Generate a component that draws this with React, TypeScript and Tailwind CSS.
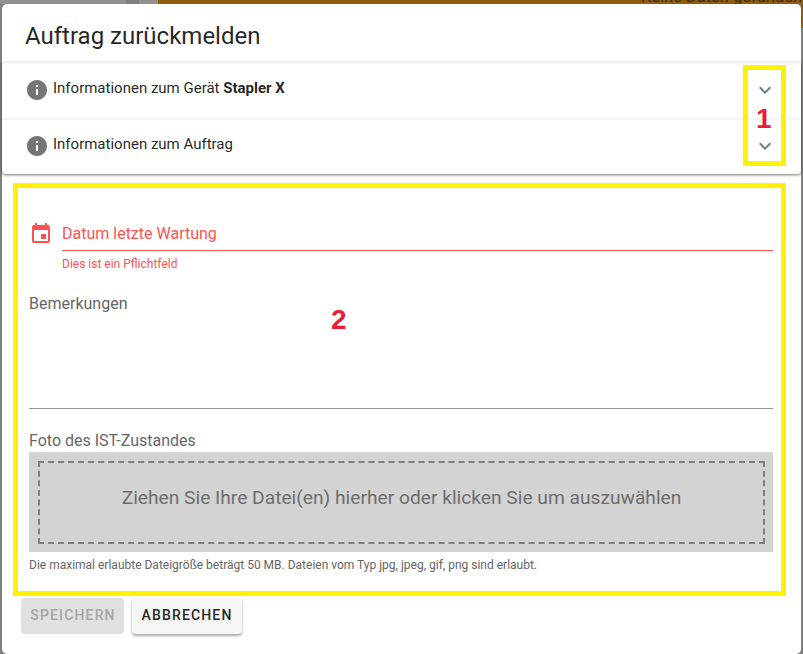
function InfoIcon() {
  return (
    <svg width="24" height="24" viewBox="0 0 24 24" className="shrink-0 fill-[#757575]">
      <path d="M12 2C6.48 2 2 6.48 2 12s4.48 10 10 10 10-4.48 10-10S17.52 2 12 2zm1 15h-2v-6h2v6zm0-8h-2V7h2v2z" />
    </svg>
  );
}

function CalendarIcon() {
  return (
    <svg width="24" height="24" viewBox="0 0 24 24" className="shrink-0 fill-[#ff5252]">
      <path d="M17 12h-5v5h5v-5zM16 1v2H8V1H6v2H5c-1.11 0-1.99.9-1.99 2L3 19c0 1.1.89 2 2 2h14c1.1 0 2-.9 2-2V5c0-1.1-.9-2-2-2h-1V1h-2zm3 18H5V8h14v11z" />
    </svg>
  );
}

function ExpandIcon() {
  return (
    <svg width="24" height="24" viewBox="0 0 24 24" className="ml-auto shrink-0 fill-[#6f7d90]">
      <path d="M16.59 8.59L12 13.17 7.41 8.59 6 10l6 6 6-6z" />
    </svg>
  );
}

function InfoRow({ children }: { children: React.ReactNode }) {
  return (
    <div className="h-14 flex items-center pb-[2px] pl-[23px] pr-6 border-t-2 border-[#f5f5f5] text-[15px] text-[rgba(0,0,0,0.87)]">
      <InfoIcon />
      <span className="ml-[4px] mb-[4px]">{children}</span>
      <ExpandIcon />
    </div>
  );
}

export default function App() {
  return (
    <div className="relative h-[654px] w-[803px] overflow-hidden bg-[#7f7f7f] font-['Roboto',sans-serif]">
      {/* Seite hinter dem Dialog */}
      <div className="flex h-1 overflow-hidden bg-[#919191]">
        <div className="w-[126px] shrink-0" />
        <div className="w-[13px] shrink-0 bg-[#808080]" />
        <div className="w-[19px] shrink-0" />
        <div className="flex min-w-0 flex-1 bg-[#8f5b0c] pl-[483px] text-[16.5px] leading-6 text-[#3b2a10]">
          <span className="mt-[-15px] whitespace-nowrap">Keine Daten gefunden</span>
        </div>
      </div>
      <div className="absolute right-0 top-1 h-6 w-[2px] bg-[#8f5b0c]" />

      <div className="absolute left-[2px] top-1 w-[799px] h-[650px] bg-white rounded-[5px]">
        <h2 className="px-[23px] pt-[16px] h-[58px] text-[24px] leading-8 text-[rgba(0,0,0,0.87)]">
          Auftrag zurückmelden
        </h2>

        <div className="rounded-b-[4px] shadow-[0_1px_3px_rgba(0,0,0,0.55)]">
          <InfoRow>
            Informationen zum Gerät <b className="font-bold">Stapler X</b>
          </InfoRow>
          <InfoRow>Informationen zum Auftrag</InfoRow>
        </div>

        <form className="pl-[27px] pr-[28px] pt-[48px]">
          <div className="flex items-start">
            <CalendarIcon />
            <div className="ml-[9px] flex-1">
              <div className="h-[28px] text-[16px] leading-6 text-[#ff5252]">Datum letzte Wartung</div>
              <div className="h-px bg-[#ff5252]" />
              <div className="mt-[6px] text-[12px] leading-[15px] text-[#ff5252]">
                Dies ist ein Pflichtfeld
              </div>
            </div>
          </div>

          <div className="mt-[20px] h-[116px] text-[16px] leading-6 text-[#666666]">Bemerkungen</div>
          <div className="h-px bg-[#949494]" />

          <div className="mt-[20px] text-[16px] leading-6 text-[#666666]">Foto des IST-Zustandes</div>

          <div className="h-[100px] mt-[-1px] pt-[9px] pb-[8px] pl-[9px] pr-[8px] bg-[#d3d3d3]">
            <div className="h-full pb-[9px] flex items-center justify-center border-2 border-dashed border-[#7f7f7f] text-[19.2px] text-[#6e6e6e]">
              Ziehen Sie Ihre Datei(en) hierher oder klicken Sie um auszuwählen
            </div>
          </div>

          <p className="mt-[5px] text-[12px] leading-4 text-[#666666]">
            Die maximal erlaubte Dateigröße beträgt 50 MB. Dateien vom Typ jpg, jpeg, gif, png sind erlaubt.
          </p>
        </form>

        <div className="absolute left-[19px] top-[594px] flex gap-[8px]">
          <button className="h-9 w-[103px] pb-[1px] pl-[1px] rounded-[4px] bg-[#e0e0e0] text-[14px] font-medium tracking-[1.15px] text-[#a6a6a6]">
            SPEICHERN
          </button>
          <button className="h-9 w-[110px] pb-[1px] rounded-[4px] bg-[#f5f5f5] text-[14px] font-medium tracking-[1.15px] text-[rgba(0,0,0,0.87)] shadow-[0_2px_3px_rgba(0,0,0,0.35)]">
            ABBRECHEN
          </button>
        </div>
      </div>

      {/* Markierungen im Screenshot */}
      <div className="absolute left-[743px] top-[65px] h-[101px] w-[43px] border-[5px] border-[#fff200]" />
      <div className="absolute left-[13px] top-[183px] h-[413px] w-[773px] border-[5px] border-[#fff200]" />
      <span className="absolute left-[756px] top-[103px] text-[28px] leading-8 font-bold text-[#ed1c3c] font-['Liberation_Sans',sans-serif]">
        1
      </span>
      <span className="absolute left-[331px] top-[304px] text-[28px] leading-8 font-bold text-[#ed1c3c] font-['Liberation_Sans',sans-serif]">
        2
      </span>
    </div>
  );
}
